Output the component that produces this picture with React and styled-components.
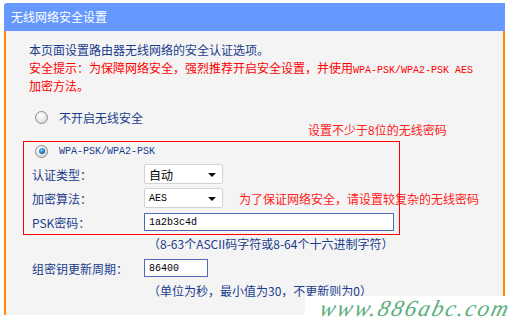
import React from 'react';
import styled, { createGlobalStyle } from 'styled-components';

const GlobalStyle = createGlobalStyle`
  html, body {
    margin: 0;
    padding: 0;
    background: #fff;
  }
  body {
    font-family: "Noto Sans CJK SC", "Liberation Sans", sans-serif;
    font-size: 12px;
  }
`;

const Page = styled.div`
  position: relative;
  width: 510px;
  height: 322px;
  overflow: hidden;
`;

const Frame = styled.div`
  margin: 3px 0 0 4px;
  width: 501px;
`;

const Header = styled.div`
  height: 28px;
  background: #6699ff;
  border-top-left-radius: 3px;
  color: #fff;
  font-size: 12px;
  line-height: 28px;
  padding-left: 7px;
`;

const Panel = styled.div`
  position: relative;
  background: #f4f4f4;
  border-left: 2px solid #ff8a00;
  border-right: 2px solid #ff8a00;
  padding: 10px 0 15px 23px;
`;

const Line = styled.div`
  line-height: 18px;
  height: 18px;
  white-space: nowrap;
  color: ${p => (p.$warn ? '#ff0000' : '#1a3c8c')};
`;

const Mono = styled.span`
  font-family: "Liberation Mono", monospace;
  font-size: 10px;
`;

const RadioRow = styled.label`
  display: flex;
  align-items: center;
  height: 18px;
  margin-top: ${p => p.$top}px;
  color: #1a3c8c;
  white-space: nowrap;
`;

const Radio = styled.span`
  width: 11px;
  height: 11px;
  margin: 0 11px 0 6px;
  border-radius: 50%;
  border: 1px solid #8a8a8a;
  background: radial-gradient(circle at 40% 35%, #ffffff 0%, #e6e6e6 55%, #c8c8c8 100%);
  display: flex;
  align-items: center;
  justify-content: center;
  &::after {
    content: '';
    display: ${p => (p.$checked ? 'block' : 'none')};
    width: 6px;
    height: 6px;
    border-radius: 50%;
    background: radial-gradient(circle at 40% 35%, #7fd0ff 0%, #1b6fb0 60%, #0a3a66 100%);
  }
`;

const Row = styled.div`
  display: flex;
  align-items: center;
  height: ${p => p.$h || 18}px;
  margin-top: ${p => p.$top}px;
  padding-left: 3px;
  white-space: nowrap;
`;

const Label = styled.span`
  width: 112px;
  color: #1a3c8c;
`;

const Select = styled.div`
  box-sizing: border-box;
  width: 79px;
  height: 20px;
  background: #fff;
  border: 1px solid #d2d2d2;
  border-radius: 2px;
  display: flex;
  align-items: center;
  justify-content: space-between;
  padding: 0 6px 0 4px;
  color: #000;
  &::after {
    content: '';
    border-left: 4px solid transparent;
    border-right: 4px solid transparent;
    border-top: 4px solid #111;
    margin-top: 1px;
  }
`;

const Input = styled.div`
  box-sizing: border-box;
  width: ${p => p.$w}px;
  height: 18px;
  background: #fff;
  border: 1px solid #4d6bb3;
  display: flex;
  align-items: center;
  padding-left: 4px;
  color: #000;
  font-family: "Liberation Mono", monospace;
  font-size: 10px;
`;

const Hint = styled.div`
  height: 18px;
  line-height: 18px;
  margin-top: ${p => p.$top}px;
  padding-left: 119px;
  color: #1a3c8c;
  white-space: nowrap;
`;

const Note = styled.span`
  color: #ff2020;
  margin-left: ${p => p.$left || 0}px;
  position: relative;
  z-index: 2;
`;

const FloatNote = styled(Note)`
  position: absolute;
  left: 302px;
  top: 90px;
  line-height: 18px;
`;

const MarkBox = styled.div`
  position: absolute;
  left: 17px;
  top: 110px;
  width: 375px;
  height: 92px;
  border: 1px solid #ff0000;
  pointer-events: none;
  z-index: 1;
`;

const Watermark = styled.div`
  position: absolute;
  left: 305px;
  top: 296px;
  width: 205px;
  height: 26px;
  background: #fff;
`;

const MarkText = styled.div`
  color: #5aae7c;
  font-family: "Liberation Serif", serif;
  font-style: italic;
  font-size: 23px;
  line-height: 26px;
  letter-spacing: 2px;
  padding-left: 12px;
  white-space: nowrap;
  transform: skewX(-14deg);
  transform-origin: left bottom;
`;

export default function App() {
  return (
    <Page>
      <GlobalStyle />
      <Frame>
        <Header>无线网络安全设置</Header>
        <Panel>
          <Line>本页面设置路由器无线网络的安全认证选项。</Line>
          <Line $warn>
            安全提示：为保障网络安全，强烈推荐开启安全设置，并使用<Mono>WPA-PSK/WPA2-PSK AES</Mono>
          </Line>
          <Line $warn>加密方法。</Line>

          <RadioRow $top={13}>
            <Radio />
            不开启无线安全
          </RadioRow>
          <FloatNote>设置不少于8位的无线密码</FloatNote>

          <RadioRow $top={16}>
            <Radio $checked />
            <Mono>WPA-PSK/WPA2-PSK</Mono>
          </RadioRow>
          <Row $h={20} $top={4}>
            <Label>认证类型：</Label>
            <Select>自动</Select>
          </Row>
          <Row $h={20} $top={4}>
            <Label>加密算法：</Label>
            <Select><Mono>AES</Mono></Select>
            <Note $left={16}>为了保证网络安全，请设置较复杂的无线密码</Note>
          </Row>
          <Row $top={5}>
            <Label>PSK密码：</Label>
            <Input $w={250}>1a2b3c4d</Input>
          </Row>
          <Hint $top={4}>（8-63个ASCII码字符或8-64个十六进制字符）</Hint>
          <Row $top={6}>
            <Label>组密钥更新周期：</Label>
            <Input $w={64}>86400</Input>
          </Row>
          <Hint $top={5}>（单位为秒，最小值为30，不更新则为0）</Hint>

          <MarkBox />
        </Panel>
      </Frame>
      <Watermark>
        <MarkText>www.886abc.com</MarkText>
      </Watermark>
    </Page>
  );
}
